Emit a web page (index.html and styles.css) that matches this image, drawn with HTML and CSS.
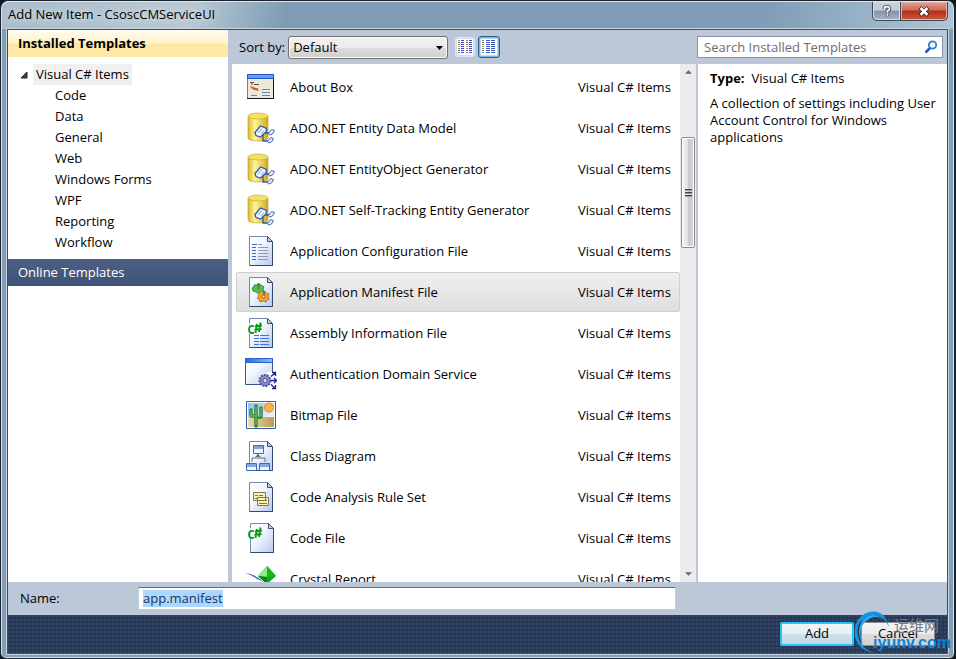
FILE: index.html
```html
<!DOCTYPE html>
<html lang="en">
<head>
<meta charset="utf-8">
<title>Add New Item - CsoscCMServiceUI</title>
<link rel="stylesheet" href="styles.css">
</head>
<body>
<svg class="defs" aria-hidden="true">
  <defs>
    <linearGradient id="paper" x1="0" y1="0" x2="1" y2="1"><stop offset="0" stop-color="#fff"/><stop offset=".4" stop-color="#f4f8fe"/><stop offset="1" stop-color="#b4c9ee"/></linearGradient>
    <linearGradient id="gold" x1="0" x2="1"><stop offset="0" stop-color="#d9b92f"/><stop offset=".35" stop-color="#fff59a"/><stop offset="1" stop-color="#d0a91d"/></linearGradient>
    <linearGradient id="bar" x1="0" x2="1"><stop offset="0" stop-color="#2f6be0"/><stop offset="1" stop-color="#8fb8fb"/></linearGradient>
    <linearGradient id="sky" x1="0" y1="0" x2="1" y2="1"><stop offset="0" stop-color="#8fbdf0"/><stop offset="1" stop-color="#f2f8fd"/></linearGradient>
    <linearGradient id="sand" x1="0" x2="1"><stop offset="0" stop-color="#eadfae"/><stop offset="1" stop-color="#b99a52"/></linearGradient>
    <symbol id="page" viewBox="0 0 32 32">
      <path d="M4.500 1.500H22L27.500 7V30.500H4.500Z" fill="url(#paper)" stroke="#7189ad"/>
      <path d="M27.500 7V30.500H4.500" fill="none" stroke="#31486f"/>
      <path d="M22.500 1.500V6.500H27.500Z" fill="#c5d0e3" stroke="#3c4d6e"/>
    </symbol>
    <symbol id="about" viewBox="0 0 32 32">
      <path d="M2.500 3.500H28.500V27.500H2.500Z" fill="#ece9d8" stroke="#6584b4"/>
      <path d="M2 3H29V8H2Z" fill="#2459cc"/><path d="M3 4H28V7H3Z" fill="#6b9bf4"/>
      <path d="M28.500 8V27.500H2" fill="none" stroke="#15152c"/>
      <path d="M5 11.500H9M7 11V14M9 13.500H14" stroke="#555" fill="none"/>
      <path d="M5 15L8 16L11 17L13 17L12 19L9 19L6 17ZM10 19L13 18L14 20Z" fill="#d9581b"/>
      <path d="M17 18.500H25M17 21.500H25M17 24.500H25M6 24.500H12" stroke="#6486bd"/>
    </symbol>
    <symbol id="entity" viewBox="0 0 32 32">
      <path d="M3 4V26C3 30 23 30 23 26V4Z" fill="url(#gold)" stroke="#bd9b25" stroke-width=".6"/>
      <ellipse cx="13" cy="4" rx="10" ry="3" fill="#f2e35f" stroke="#c6a52b" stroke-width=".6"/>
      <path d="M18 21V29H24M20 21H26" fill="none" stroke="#3355a0" stroke-width="1.300"/>
      <path d="M10 20.500L15.500 14 21.500 16.500 21 20 15.500 25 11 23.500Z" fill="#f4f8ff" stroke="#2d58a8" stroke-width="1.300"/>
      <path d="M13 21L17 16.500M16 22L19 19" stroke="#a9bfe2" stroke-width="1.500"/>
      <path d="M23.500 21.500L26.500 17.500 29.500 18.500 27.500 22 24.500 23ZM22.500 29.500L25.500 25.500 28.500 26.500 26.500 30 23.500 31Z" fill="#e8f0ff" stroke="#4267b1"/>
    </symbol>
    <symbol id="config" viewBox="0 0 32 32">
      <use href="#page"/>
      <path d="M7 9.500H12M7 12.500H11M7 15.500H11M7 18.500H11M7 21.500H11M7 24.500H11" stroke="#2e69dc"/>
      <path d="M13 9.500H17M13 12.500H23M13 15.500H23M13 18.500H23M13 21.500H23M13 24.500H23" stroke="#8d99af"/>
    </symbol>
    <symbol id="manifest" viewBox="0 0 32 32">
      <use href="#page"/>
      <path d="M7 12l2-1V9h3l1-1 3 1 3 2-1 2 1 3-2 1-2-1-2 1-2-1-3-1z" fill="#48c942" stroke="#2e9836"/>
      <path d="M13 18l2-1v-2l3 1 2-1 1 2 3 1-1 2 1 3-2 1-1 2-3-1-3 1-1-3-2-1 2-2z" fill="#f3a22c" stroke="#bd7a22"/>
      <circle cx="18.500" cy="20.500" r="1.500" fill="#fff1bc" stroke="#995c18"/><path d="M13.500 7v6M19 15v4" stroke="#667066" stroke-width="2"/>
    </symbol>
    <symbol id="sharp" viewBox="0 0 32 32">
      <path d="M9 9.500C6 8 4 9.500 4 12.500S6.500 17 9 15.500M12 7L10.500 16M15.500 5.500L14 15M10 9.500L17 8.500M9.500 13L16.500 12" fill="none" stroke="#079b18" stroke-width="1.900"/>
    </symbol>
    <symbol id="assembly" viewBox="0 0 32 32">
      <use href="#page"/><path d="M2 6H17V17H2Z" fill="#fff" opacity=".7"/><use href="#sharp"/>
      <path d="M9 18.500H14M9 21.500H14M9 24.500H14M9 27.500H14M15 18.500H24M15 21.500H24M15 24.500H24M15 27.500H24" stroke="#3974df"/>
    </symbol>
    <symbol id="auth" viewBox="0 0 32 32">
      <path d="M.5 .5H27.500V26.500H.5Z" fill="url(#paper)" stroke="#3c5687"/>
      <path d="M0 0H28V5H0Z" fill="#2c62ce"/><path d="M1 1H27V4H1Z" fill="url(#bar)"/>
      <path d="M22 14H32V31H22Z" fill="#fff"/>
      <circle cx="20" cy="22.500" r="5.500" fill="#8788cc" stroke="#51519e" stroke-width="2" stroke-dasharray="2 1"/>
      <circle cx="20" cy="22.500" r="2" fill="#e7e7fa" stroke="#55559f"/>
      <path d="M26 18.500L30 15M27 14.500H30.500V18M26 22.500H31M29 20L31.500 22.500 29 25M26 26.500L30 30M27 30.500H30.500V27" fill="none" stroke="#251f99" stroke-width="1.300"/>
    </symbol>
    <symbol id="bitmap" viewBox="0 0 32 32">
      <path d="M1.500 2.500H30.500V29.500H1.500Z" fill="#fff" stroke="#315bad"/>
      <path d="M3 4H29V18H3Z" fill="url(#sky)"/><path d="M3 18H29V28H3Z" fill="url(#sand)"/>
      <circle cx="24" cy="8.500" r="4.500" fill="#f9b250" stroke="#e38b29"/>
      <path d="M11 27V7M6 11V17H11M16 9V18H11" fill="none" stroke="#2c823a" stroke-width="3.500" stroke-linecap="round" stroke-linejoin="round"/>
      <path d="M11 26V7M6 11V17H10M16 9V17H12" fill="none" stroke="#6cb864" stroke-width="1.300" stroke-linejoin="round"/>
    </symbol>
    <symbol id="diagram" viewBox="0 0 32 32">
      <use href="#page"/>
      <path d="M13 13v4M7 22v-4H20v4" fill="none" stroke="#5f6c82"/><path d="M13 14l3 3h-6z" fill="#65748b"/>
      <path d="M8.500 5.500H18.500V13.500H8.500ZM1.500 23.500H11.500V30.500H1.500ZM14.500 23.500H24.500V30.500H14.500Z" fill="#eef5ff" stroke="#4567a5"/>
      <path d="M9 6H18V9H9ZM2 24H11V27H2ZM15 24H24V27H15Z" fill="#7fa6e8"/>
    </symbol>
    <symbol id="rules" viewBox="0 0 32 32">
      <use href="#page"/>
      <path d="M8.500 11.500H20.500V19.500H8.500ZM12.500 16.500H23.500V24.500H12.500Z" fill="#fff2a8" stroke="#7a7866"/>
      <path d="M10 14.500H13M14 14.500H18M14 19.500H17M18 19.500H22M14 22.500H22M10 17.500H12" stroke="#77735b"/>
    </symbol>
    <symbol id="code" viewBox="0 0 32 32"><use href="#page" x="1"/><path d="M2 6H17V17H2Z" fill="#fff" opacity=".7"/><use href="#sharp"/></symbol>
    <symbol id="crystal" viewBox="0 0 32 32">
      <path d="M0 10Q10 11 19 19L12 16Q7 12 0 10" fill="#3b70cf"/>
      <path d="M22 3L31 13 22 21 13 13Z" fill="#14a820"/><path d="M22 3V14L13 13Z" fill="#90ec83"/><path d="M22 3V14L31 13Z" fill="#18b71e"/><path d="M13 13L22 14V21Z" fill="#07851d"/>
    </symbol>
  </defs>
</svg>

<main class="window">
  <header class="titlebar">
    <h1>Add New Item - CsoscCMServiceUI</h1>
    <div class="caption">
      <button class="help" aria-label="Help"><svg viewBox="0 0 14 14"><path d="M4 5V3.500Q4 2 7 2T10 4.500Q10 6 7.500 7V9M7.500 10.500V13" fill="none" stroke="#40495a" stroke-width="4"/><path d="M4 5V3.500Q4 2 7 2T10 4.500Q10 6 7.500 7V9M7.500 10.500V12.500" fill="none" stroke="#fff" stroke-width="2"/></svg></button>
      <button class="close" aria-label="Close"><svg viewBox="0 0 14 14"><path d="M2 3L12 12M12 3L2 12" stroke="#533" stroke-width="5"/><path d="M3 3.500L11 11.500M11 3.500L3 11.500" stroke="#fff" stroke-width="3"/></svg></button>
    </div>
  </header>

  <div class="client">
    <div class="workspace">
      <nav class="sidebar" aria-label="Templates">
        <h2>Installed Templates</h2>
        <div class="tree">
          <div class="root"><svg viewBox="0 0 8 8"><path d="M7 1V7H1Z" fill="#444" stroke="#222"/></svg><span>Visual C# Items</span></div>
          <ul>
            <li>Code</li><li>Data</li><li>General</li><li>Web</li><li>Windows Forms</li><li>WPF</li><li>Reporting</li><li>Workflow</li>
          </ul>
        </div>
        <button class="online">Online Templates</button>
      </nav>

      <section class="browser">
        <div class="toolbar">
          <label for="sort">Sort by:</label>
          <div class="combo"><select id="sort"><option>Default</option></select><svg viewBox="0 0 8 5"><path d="M1 0H8L4.500 4Z"/></svg></div>
          <button class="view" aria-label="Small icons"><svg viewBox="0 0 16 16" shape-rendering="crispEdges"><path d="M0 0H16V16H0Z" fill="#fff"/><path d="M1 1.500H3M9 1.500H11M1 9.500H3M9 9.500H11" stroke="#58a06a"/><path d="M1 3.500H3M9 3.500H11M1 11.500H3M9 11.500H11" stroke="#e0362b"/><path d="M1 5.500H3M9 5.500H11M1 13.500H3M9 13.500H11" stroke="#4e8be0"/><path d="M1 7.500H3M9 7.500H11" stroke="#d8b43c"/><path d="M5.500 1V15M13.500 1V15" stroke="#3b45c5" stroke-width="3" stroke-dasharray="1 1"/></svg></button>
          <button class="view active" aria-label="Medium icons"><svg viewBox="0 0 16 16" shape-rendering="crispEdges"><path d="M0 0H16V16H0Z" fill="#fff"/><path d="M1 1.500H3M1 9.500H3" stroke="#58a06a"/><path d="M1 3.500H3M1 11.500H3" stroke="#e0362b"/><path d="M1 5.500H3M1 13.500H3" stroke="#4e8be0"/><path d="M1 7.500H3" stroke="#d8b43c"/><path d="M7 1V15M12 1V15" stroke="#3b55c5" stroke-width="4" stroke-dasharray="1 1"/></svg></button>
          <div class="search"><input type="text" placeholder="Search Installed Templates" aria-label="Search Installed Templates"><svg viewBox="0 0 14 14"><path d="M6 8L1.500 12.500" stroke="#2458a8" stroke-width="2.500"/><circle cx="8.500" cy="5" r="3.700" fill="#f2faff" stroke="#2c82d1" stroke-width="1.800"/></svg></div>
        </div>
        <div class="results">
          <ul class="items">
            <li><svg><use href="#about"/></svg><span>About Box</span><span>Visual C# Items</span></li>
            <li><svg><use href="#entity"/></svg><span>ADO.NET Entity Data Model</span><span>Visual C# Items</span></li>
            <li><svg><use href="#entity"/></svg><span>ADO.NET EntityObject Generator</span><span>Visual C# Items</span></li>
            <li><svg><use href="#entity"/></svg><span>ADO.NET Self-Tracking Entity Generator</span><span>Visual C# Items</span></li>
            <li><svg><use href="#config"/></svg><span>Application Configuration File</span><span>Visual C# Items</span></li>
            <li class="selected"><svg><use href="#manifest"/></svg><span>Application Manifest File</span><span>Visual C# Items</span></li>
            <li><svg><use href="#assembly"/></svg><span>Assembly Information File</span><span>Visual C# Items</span></li>
            <li><svg><use href="#auth"/></svg><span>Authentication Domain Service</span><span>Visual C# Items</span></li>
            <li><svg><use href="#bitmap"/></svg><span>Bitmap File</span><span>Visual C# Items</span></li>
            <li><svg><use href="#diagram"/></svg><span>Class Diagram</span><span>Visual C# Items</span></li>
            <li><svg><use href="#rules"/></svg><span>Code Analysis Rule Set</span><span>Visual C# Items</span></li>
            <li><svg><use href="#code"/></svg><span>Code File</span><span>Visual C# Items</span></li>
            <li><svg><use href="#crystal"/></svg><span>Crystal Report</span><span>Visual C# Items</span></li>
          </ul>
          <div class="scrollbar" aria-hidden="true">
            <svg class="arrow" viewBox="0 0 8 4"><path d="M4 0L8 4H0Z"/></svg>
            <div class="track"><div class="thumb"><i></i><i></i><i></i></div></div>
            <svg class="arrow" viewBox="0 0 8 4"><path d="M0 0H8L4 4Z"/></svg>
          </div>
          <aside class="details">
            <p><b>Type:</b><span>Visual C# Items</span></p>
            <p>A collection of settings including User Account Control for Windows applications</p>
          </aside>
        </div>
      </section>
    </div>

    <div class="namebar">
      <label for="name">Name:</label>
      <div class="field"><input id="name" type="text" value="app.manifest"></div>
    </div>
    <footer class="actions">
      <button class="primary">Add</button>
      <button>Cancel</button>
    </footer>
  </div>

  <div class="watermark">
    <svg viewBox="0 0 40 44"><path d="M35 16Q29 1 15 5Q1 10 4 25Q7 38 20 42Q4 39 1 26Q-2 9 12 2Q30-4 35 16Z" fill="#1593e2"/><path d="M32 10Q20 1 10 12Q3 22 10 34Q1 22 8 10Q18-2 32 10Z" fill="#2aaaf0"/></svg>
    <span class="cn" lang="zh">运维网</span>
    <span class="domain">iyunv.com</span>
  </div>
</main>
</body>
</html>
```

FILE: styles.css
```css
* { box-sizing: border-box; }
body {
  margin: 0;
  background: #15181e;
  color: #000;
  font: 13px/17px "Open Sans", "Noto Sans", sans-serif;
}
button, input, select { font: inherit; color: inherit; margin: 0; }
h1, h2, p, ul { margin: 0; padding: 0; font: inherit; list-style: none; }
.defs { position: absolute; width: 0; height: 0; }

.window {
  position: relative;
  display: flex;
  flex-direction: column;
  height: 100vh;
  border: 1px solid #1c222c;
  border-right-width: 2px;
  border-radius: 8px 8px 6px 6px;
  padding: 0 6px 4px;
  background: #829fb7;
  box-shadow: inset 0 0 0 1px #d5e4ee;
}
.titlebar {
  display: flex;
  flex: 0 0 28px;
  justify-content: space-between;
  margin: 0 -5px;
  padding: 0 5px 0 6px;
  border-radius: 7px 7px 0 0;
  border-top: 1px solid #dce8f1;
  background: linear-gradient(100deg, #a9bccb 0, #b9c8d4 20%, #7e9cb4 30%, #7f9db6 80%, #afc5d7);
}
.titlebar h1 { padding-top: 4px; text-shadow: 0 0 8px #fff; }
.caption { display: flex; height: 19px; }
.caption button {
  display: grid;
  place-items: center;
  width: 29px;
  padding: 0;
  border: 1px solid #3f4a58;
  border-top: 0;
  border-radius: 0 0 0 5px;
  background: linear-gradient(#c4ced8 45%, #8393a4 50%, #a6b5c5);
  box-shadow: inset 0 0 0 1px #d4dde5;
}
.caption .close {
  width: 47px;
  border-left: 0;
  border-radius: 0 0 5px 0;
  background: linear-gradient(#e2a298, #cc6958 45%, #b22d16 50%, #cf583f);
  box-shadow: inset 0 0 0 1px #e7aca2;
}
.caption svg { width: 12px; height: 12px; }

.client {
  display: flex;
  flex: 1;
  flex-direction: column;
  min-height: 0;
  border: 1px solid #3e525c;
  background: #bcc7d8;
  box-shadow: 0 0 0 1px #c2d4df;
}
.workspace { display: flex; flex: 1; gap: 4px; min-height: 0; }
.sidebar { flex: 0 0 220px; background: #fff; }
.sidebar h2 {
  height: 27px;
  padding: 5px 10px;
  background: linear-gradient(#fffcf2, #fff3ca 48%, #ffe8a6 52%, #ffe8a6);
  font-weight: bold;
}
.tree { padding: 7px 0 6px; }
.root { display: flex; align-items: center; gap: 5px; height: 21px; padding-left: 12px; }
.root svg { width: 8px; height: 8px; }
.root span { padding: 2px 3px; background: #f0f0f0; }
.tree li { height: 21px; padding: 2px 0 2px 47px; }
.online {
  display: block;
  width: 100%;
  height: 27px;
  padding: 0 10px;
  border: 0;
  background: linear-gradient(#4d6083, #3e5277);
  color: #fff;
  text-align: left;
}

.browser { display: flex; flex: 1; flex-direction: column; min-width: 0; }
.toolbar { display: flex; flex: 0 0 34px; align-items: center; padding: 0 4px 0 7px; }
.toolbar label { flex: 0 0 46px; white-space: nowrap; }
.combo { position: relative; width: 160px; margin: 0 7px 0 3px; }
.combo select {
  display: block;
  width: 100%;
  height: 23px;
  padding: 0 4px;
  border: 1px solid #707070;
  border-radius: 3px;
  appearance: none;
  background: linear-gradient(#f2f2f2, #ebebeb 50%, #dddddd 50%, #cfcfcf);
  box-shadow: inset 0 0 0 1px #fafafa;
}
.combo svg { position: absolute; top: 10px; right: 5px; width: 8px; height: 5px; }
.view {
  display: grid;
  place-items: center;
  width: 20px;
  height: 20px;
  margin-right: 3px;
  padding: 0;
  border: 1px solid #e2e8f2;
  border-radius: 3px;
  background: #d4dbe7;
}
.view.active {
  width: 22px;
  height: 22px;
  border: 1px solid #2c628b;
  background: #b5def3;
  box-shadow: inset 0 0 0 1px #76b8da;
}
.view svg { width: 16px; height: 16px; }
.search {
  display: flex;
  align-items: center;
  width: 246px;
  height: 22px;
  margin-left: auto;
  padding: 0 4px 0 6px;
  border: 1px solid #8592a8;
  background: #fff;
}
.search input { flex: 1; min-width: 0; padding: 0; border: 0; outline: 0; background: none; }
.search input::placeholder { color: #6d6d6d; opacity: 1; }
.search svg { width: 14px; height: 14px; }

.results { display: flex; flex: 1; min-height: 0; }
.items { flex: 1; min-width: 0; overflow: hidden; padding: 3px 0 0 4px; background: #fff; }
.items li {
  display: grid;
  grid-template-columns: 32px 1fr 101px;
  column-gap: 13px;
  align-items: center;
  height: 40px;
  margin-bottom: 1px;
  padding-left: 8px;
  border: 1px solid transparent;
  border-radius: 2px;
}
.items li.selected { border-color: #cfcfcf; background: linear-gradient(#efefef, #dfdfdf); }
.items svg { width: 32px; height: 32px; }
.scrollbar {
  display: flex;
  flex: 0 0 16px;
  flex-direction: column;
  align-items: center;
  padding: 6px 0;
  background: #ececec;
}
.arrow { width: 7px; height: 4px; fill: #666; }
.track { display: flex; flex: 1; flex-direction: column; width: 16px; padding: 63px 1px 0 0; }
.thumb {
  display: flex;
  flex: 0 0 111px;
  flex-direction: column;
  align-items: center;
  justify-content: center;
  gap: 1px;
  margin-left: 1px;
  border: 1px solid #8d8d8d;
  border-radius: 2px;
  background: linear-gradient(90deg, #f5f5f5, #e5e5e5 45%, #c9c9ce 50%, #d8d8d8);
  box-shadow: inset 0 0 0 1px #fff;
}
.thumb i { width: 7px; height: 2px; border-top: 1px solid #444; background: #999; }
.details { flex: 0 0 249px; margin-left: 2px; padding: 6px 4px 6px 12px; background: #fff; }
.details p { margin-bottom: 8px; }
.details b { margin-right: 7px; }

.namebar { display: flex; flex: 0 0 33px; align-items: center; padding-left: 12px; }
.namebar label { width: 118px; }
.field { width: 58%; }
.field input {
  display: block;
  width: 100%;
  height: 23px;
  padding: 0 4px 1px;
  border: 1px solid #b5cfe7;
  border-top-color: #3d7bad;
  outline: 0;
  background: linear-gradient(#add6ff, #add6ff) 4px 2px / 80px 17px no-repeat #fff;
  color: #17375e;
}
.actions {
  display: flex;
  flex: 0 0 38px;
  align-items: center;
  justify-content: flex-end;
  gap: 7px;
  padding-right: 12px;
  background: radial-gradient(circle at 1px 1px, #34486b 1px, transparent 1px) 0 0 / 4px 4px, #293955;
}
.actions button {
  width: 74px;
  height: 24px;
  padding: 0 0 2px;
  border: 1px solid #8c929b;
  border-radius: 2px;
  background: linear-gradient(#f3f3f3, #ececec 50%, #dcdcdc 50%, #d0d0d0);
}
.actions .primary {
  border: 2px solid #28c5f4;
  background: linear-gradient(#eef5f9, #e4eff5 50%, #cfe1eb 50%, #c1d9e6);
}

.watermark { position: absolute; right: 0; bottom: 4px; width: 102px; height: 44px; pointer-events: none; }
.watermark svg { position: absolute; left: 2px; top: 1px; width: 40px; height: 44px; }
.watermark span { position: absolute; right: 3px; white-space: nowrap; }
.watermark .cn { top: 6px; right: 15px; color: #777d87; font: 15px/18px "Noto Sans CJK SC", sans-serif; }
.watermark .domain { top: 23px; color: #0b83d6; font: bold 16px/20px "Liberation Sans", sans-serif; }
```
